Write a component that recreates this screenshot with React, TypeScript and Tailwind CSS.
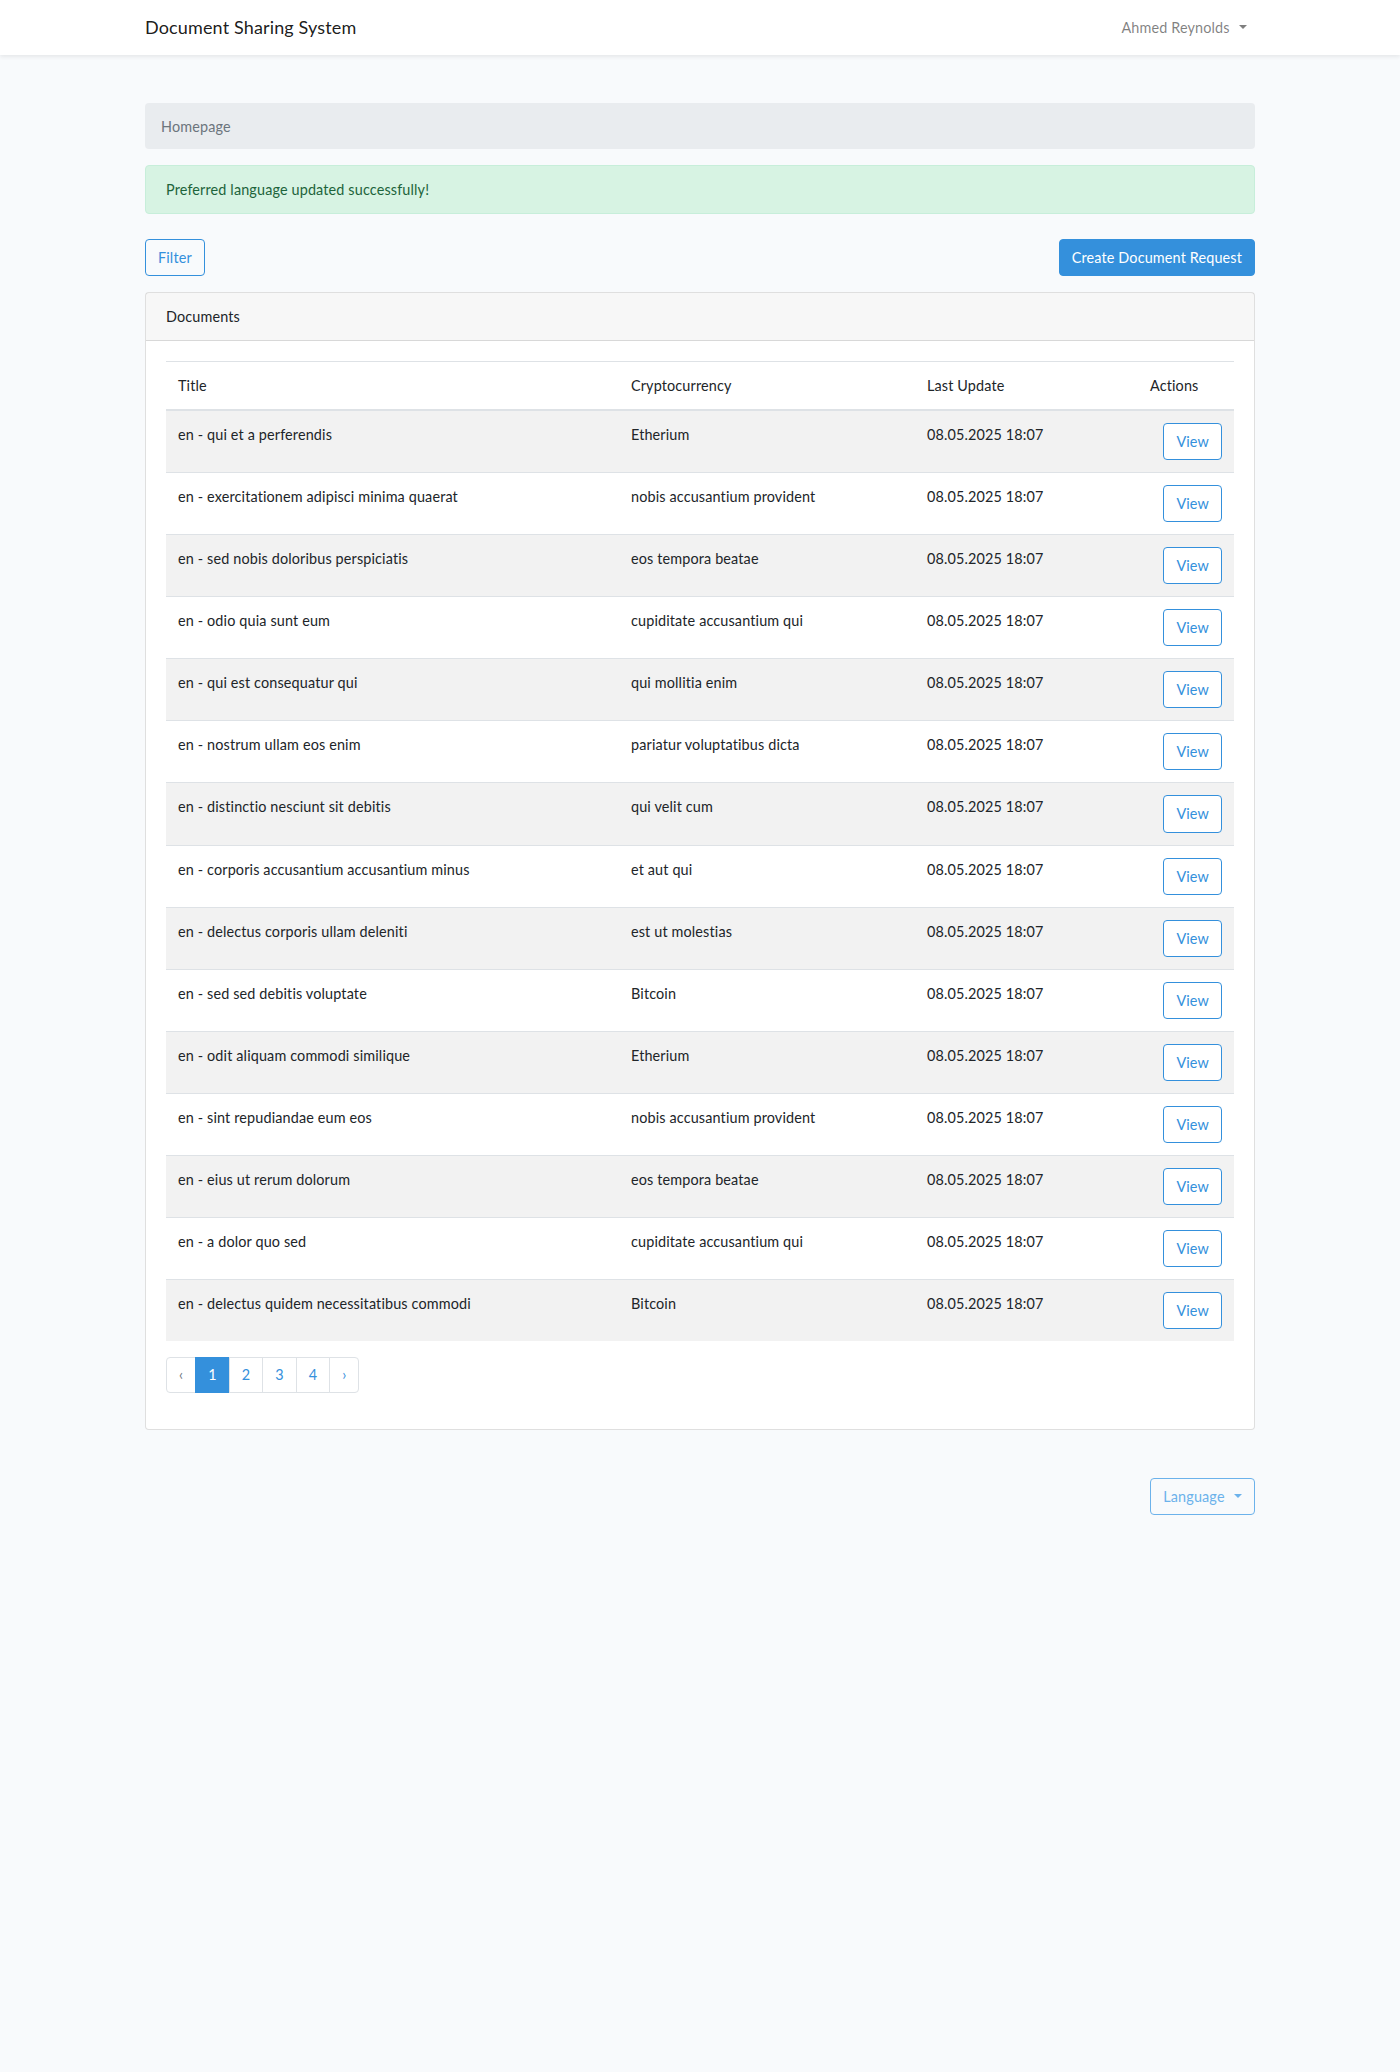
import React from "react";

const rows: [string, string][] = [
  ["en - qui et a perferendis", "Etherium"],
  ["en - exercitationem adipisci minima quaerat", "nobis accusantium provident"],
  ["en - sed nobis doloribus perspiciatis", "eos tempora beatae"],
  ["en - odio quia sunt eum", "cupiditate accusantium qui"],
  ["en - qui est consequatur qui", "qui mollitia enim"],
  ["en - nostrum ullam eos enim", "pariatur voluptatibus dicta"],
  ["en - distinctio nesciunt sit debitis", "qui velit cum"],
  ["en - corporis accusantium accusantium minus", "et aut qui"],
  ["en - delectus corporis ullam deleniti", "est ut molestias"],
  ["en - sed sed debitis voluptate", "Bitcoin"],
  ["en - odit aliquam commodi similique", "Etherium"],
  ["en - sint repudiandae eum eos", "nobis accusantium provident"],
  ["en - eius ut rerum dolorum", "eos tempora beatae"],
  ["en - a dolor quo sed", "cupiditate accusantium qui"],
  ["en - delectus quidem necessitatibus commodi", "Bitcoin"],
];

function Caret() {
  return (
    <span className="inline-block ml-[0.65em] align-[0.255em] w-0 h-0 border-t-[0.3em] border-t-current border-x-[0.3em] border-x-transparent border-b-0" />
  );
}

export default function App() {
  return (
    <div
      className="min-h-[2072px] bg-[#f8fafc] text-[#212529] text-[14.4px] leading-[1.6] tracking-[0.01em]"
      style={{ fontFamily: "Lato, 'Noto Sans', sans-serif" }}
    >
      <nav className="bg-white shadow-[0_2px_4px_rgba(0,0,0,0.075)] h-[55px]">
        <div className="w-[1140px] mx-auto px-[15px] h-full flex items-center justify-between">
          <span className="text-[18px] text-[rgba(0,0,0,0.9)]">Document Sharing System</span>
          <span className="px-2 text-[rgba(0,0,0,0.5)]">
            Ahmed Reynolds
            <Caret />
          </span>
        </div>
      </nav>

      <main className="pt-[48px]">
        <div className="w-[1140px] mx-auto px-[15px]">
          <div className="bg-[#e9ecef] rounded-[4px] px-4 py-3 text-[#6c757d] mb-4 h-[46px]">
            Homepage
          </div>

          <div className="bg-[#d7f3e3] border border-[#c7eeda] text-[#1d643b] rounded-[4px] px-5 py-3 mb-[25px]">
            Preferred language updated successfully!
          </div>

          <div className="flex justify-between mb-4">
            <button className="border border-[#3490dc] text-[#3490dc] rounded-[4px] px-3 py-[6px] leading-[1.6]">
              Filter
            </button>
            <button className="border border-[#3490dc] bg-[#3490dc] text-white rounded-[4px] px-3 py-[6px] leading-[1.6]">
              Create Document Request
            </button>
          </div>

          <div className="bg-white border border-[rgba(0,0,0,0.125)] rounded-[4px]">
            <div className="bg-[rgba(0,0,0,0.03)] border-b border-[rgba(0,0,0,0.125)] px-5 py-3">
              Documents
            </div>
            <div className="p-5">
              <table className="w-full mb-4 text-left">
                <colgroup>
                  <col className="w-[453px]" />
                  <col className="w-[296px]" />
                  <col className="w-[223px]" />
                  <col className="w-[96px]" />
                </colgroup>
                <thead>
                  <tr>
                    <th className="font-normal p-3 border-t border-b-2 border-[#dee2e6] align-bottom">Title</th>
                    <th className="font-normal p-3 border-t border-b-2 border-[#dee2e6] align-bottom">Cryptocurrency</th>
                    <th className="font-normal p-3 border-t border-b-2 border-[#dee2e6] align-bottom">Last Update</th>
                    <th className="font-normal p-3 border-t border-b-2 border-[#dee2e6] align-bottom">Actions</th>
                  </tr>
                </thead>
                <tbody>
                  {rows.map(([title, crypto], i) => (
                    <tr key={i} className={i % 2 === 0 ? "bg-[#f2f2f2]" : ""}>
                      <td className="p-3 border-t border-[#dee2e6] align-top">{title}</td>
                      <td className="p-3 border-t border-[#dee2e6] align-top">{crypto}</td>
                      <td className="p-3 border-t border-[#dee2e6] align-top">08.05.2025 18:07</td>
                      <td className="p-3 border-t border-[#dee2e6] align-top text-right">
                        <button className="border border-[#3490dc] text-[#3490dc] bg-white rounded-[4px] px-3 py-[6px] leading-[1.6]">
                          View
                        </button>
                      </td>
                    </tr>
                  ))}
                </tbody>
              </table>

              <ul className="flex mb-4">
                <li className="px-3 py-2 leading-[1.25] border border-[#dee2e6] rounded-l-[4px] text-[#6c757d] bg-white">‹</li>
                <li className="px-3 py-2 leading-[1.25] border border-[#3490dc] bg-[#3490dc] text-white -ml-px">1</li>
                <li className="px-3 py-2 leading-[1.25] border border-[#dee2e6] text-[#3490dc] bg-white -ml-px">2</li>
                <li className="px-3 py-2 leading-[1.25] border border-[#dee2e6] text-[#3490dc] bg-white -ml-px">3</li>
                <li className="px-3 py-2 leading-[1.25] border border-[#dee2e6] text-[#3490dc] bg-white -ml-px">4</li>
                <li className="px-3 py-2 leading-[1.25] border border-[#dee2e6] rounded-r-[4px] text-[#3490dc] bg-white -ml-px">›</li>
              </ul>
            </div>
          </div>

          <div className="flex justify-end mt-[48px]">
            <button className="border border-[#6cb2eb] text-[#6cb2eb] rounded-[4px] px-3 py-[6px] leading-[1.6]">
              Language
              <Caret />
            </button>
          </div>
        </div>
      </main>
    </div>
  );
}
